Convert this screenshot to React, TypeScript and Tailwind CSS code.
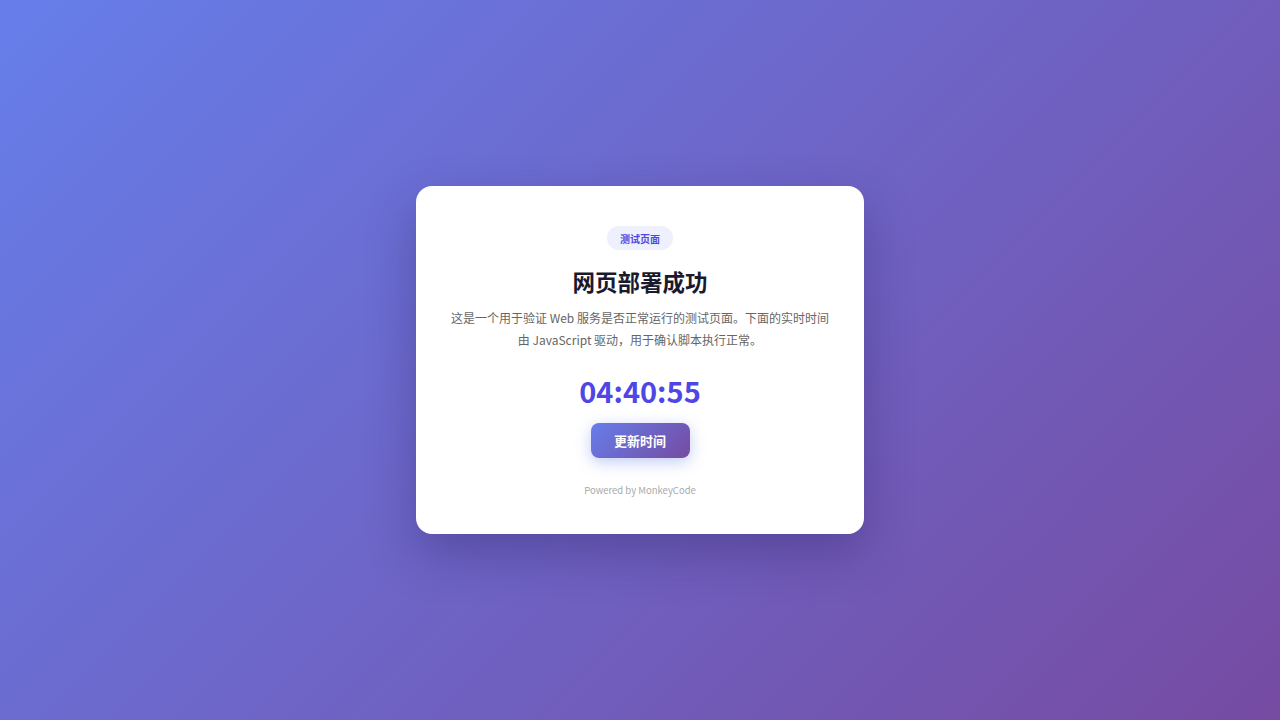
import { useState } from "react";

function formatTime(d: Date) {
  const pad = (n: number) => String(n).padStart(2, "0");
  return `${pad(d.getHours())}:${pad(d.getMinutes())}:${pad(d.getSeconds())}`;
}

export default function App() {
  const [time, setTime] = useState("04:40:55");

  return (
    <div
      className="min-h-screen w-full flex items-center justify-center bg-[linear-gradient(135deg,#667eea_0%,#764ba2_100%)]"
      style={{ fontFamily: '"Noto Sans CJK SC", "Noto Sans", sans-serif' }}
    >
      <div className="w-[448px] bg-white rounded-2xl px-8 pt-10 pb-[35px] flex flex-col items-center text-center shadow-[0_20px_50px_rgba(30,20,80,0.3)]">
        <span className="h-6 px-[13px] flex items-center rounded-full bg-[#eef0fd] text-[#4f46e5] text-[10px] font-bold">
          测试页面
        </span>
        <h1 className="mt-[17px] text-[22.5px] leading-[29px] font-bold text-[#1a1a2e]">
          网页部署成功
        </h1>
        <p className="mt-[11px] text-[12px] leading-[22px] text-[#666]">
          这是一个用于验证 Web 服务是否正常运行的测试页面。下面的实时时间由 JavaScript 驱动，用于确认脚本执行正常。
        </p>
        <div className="mt-5 text-[29px] leading-[38px] font-bold text-[#4f46e5]">
          {time}
        </div>
        <button
          onClick={() => setTime(formatTime(new Date()))}
          className="mt-[14px] w-[99px] h-[35px] rounded-lg text-white text-[13px] font-bold bg-[linear-gradient(135deg,#667eea_0%,#764ba2_100%)] shadow-[0_4px_15px_rgba(102,126,234,0.4)]"
        >
          更新时间
        </button>
        <div className="mt-[23px] text-[9.5px] leading-[18px] text-[#aaa]">
          Powered by MonkeyCode
        </div>
      </div>
    </div>
  );
}
